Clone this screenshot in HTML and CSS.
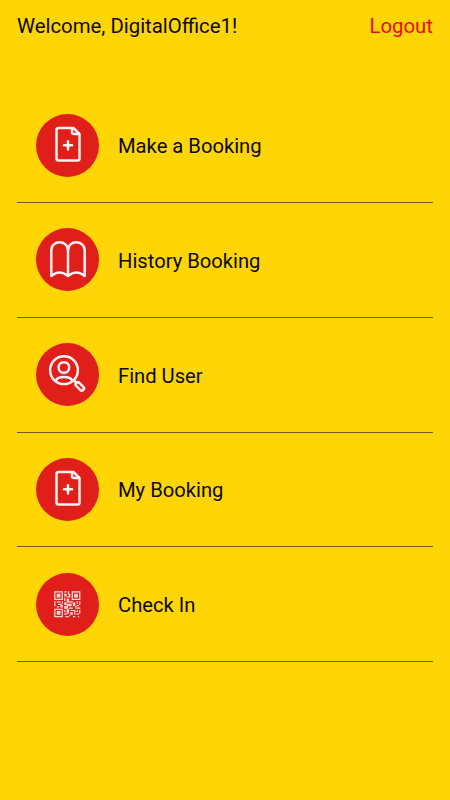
FILE: index.html
```html
<!DOCTYPE html>
<html lang="en">
<head>
<meta charset="utf-8" />
<meta name="viewport" content="width=device-width, initial-scale=1" />
<title>Digital Office</title>
<link rel="stylesheet" href="styles.css">
</head>

<body>

<header>
    <span>Welcome, DigitalOffice1!</span>
    <a class="logout" href="#">Logout</a>
</header>

<nav class="menu">
    <a href="#">
        <svg class="icon" viewBox="0 0 63 63">
            <path d="M37.500 14H22.500Q20.500 14 20.500 16V44.500Q20.500 46.500 22.500 46.500H41.500Q43.500 46.500 43.500 44.500V20L37.500 14H36V18Q36 20 38 20H43" />
            <path d="M32 27.200v8.200M27.900 31.300h8.200" />
        </svg>
        <span>Make a Booking</span>
    </a>
    <a href="#">
        <svg class="icon" viewBox="0 0 63 63">
            <path d="M32 48V22.500C32 11.600 15.300 11.600 15.300 22.500V48Q23.500 41 32 48Q40.500 41 48.700 48V22.500C48.700 11.600 32 11.600 32 22.500" />
        </svg>
        <span>History Booking</span>
    </a>
    <a href="#">
        <svg class="icon" viewBox="0 0 63 63">
            <circle cx="28" cy="27.200" r="13.900" />
            <circle cx="27.900" cy="24.500" r="5.300" />
            <path d="M19.800 37.500Q21.500 34 28 34T36.200 37.500" />
            <path d="M37.500 37l3 3" />
            <rect x="38.800" y="41.200" width="10" height="4.400" rx="2.200" transform="rotate(45 43.800 43.400)" />
        </svg>
        <span>Find User</span>
    </a>
    <a href="#">
        <svg class="icon" viewBox="0 0 63 63">
            <path d="M37.500 14H22.500Q20.500 14 20.500 16V44.500Q20.500 46.500 22.500 46.500H41.500Q43.500 46.500 43.500 44.500V20L37.500 14H36V18Q36 20 38 20H43" />
            <path d="M32 27.200v8.200M27.900 31.300h8.200" />
        </svg>
        <span>My Booking</span>
    </a>
    <a href="#">
        <svg class="icon" viewBox="0 0 63 63">
            <g class="qr" transform="translate(18.200 18.200) scale(1.245)">
                <!-- finder squares -->
                <path d="M0 0h7v7H0zM1 1v5h5V1zM2 2h3v3H2z" />
                <path d="M14 0h7v7h-7zM15 1v5h5V1zM16 2h3v3h-3z" />
                <path d="M0 14h7v7H0zM1 15v5h5v-5zM2 16h3v3H2z" />
                <!-- data -->
                <path d="M8 0h2v1H8zM11 0h1v3h-1zM8 2h2v2H8zM10 4h3v1h-3zM8 5h1v3H8zM10 6h2v3h-2zM12 2h1v2h-1z" />
                <path d="M0 8h1v4H0zM2 8h3v1H2zM3 10h3v1H3zM2 12h2v1H2zM5 11h2v2H5zM6 8h1v2H6zM8 9h2v2H8z" />
                <path d="M10 10h4v2h-4zM12 8h3v1h-3zM8 12h3v2H8zM12 13h3v1h-3zM15 9h2v3h-2zM18 8h1v2h-1zM20 8h1v3h-1zM18 11h2v1h-2zM17 12h1v2h-1z" />
                <path d="M8 15h1v2H8zM10 14h2v4h-2zM8 18h2v1H8zM9 20h3v1H9zM13 15h4v1h-4zM13 17h2v2h-2zM12 19h1v1h-1zM16 16h1v3h-1zM18 13h3v1h-3zM18 15h1v2h-1zM20 15h1v3h-1zM18 18h2v1h-2zM15 20h2v1h-2zM19 20h1v1h-1z" />
            </g>
        </svg>
        <span>Check In</span>
    </a>
</nav>

</body>
</html>
```
FILE: styles.css
```css
body {
    background: #FFD506;
    color: #0A0A00;
    font-family: Roboto, "Liberation Sans", sans-serif;
    font-size: 20.2px;
    line-height: 24px;
    margin: 0;
    padding: 14px 17px 0;
}

a {
    color: inherit;
    text-decoration: none;
}

header {
    display: flex;
    font-size: 20.35px;
    justify-content: space-between;
}

header .logout {
    color: #E60D0D;
}

.menu {
    margin-top: 50.2px;
}

.menu a {
    align-items: center;
    border-bottom: 1px solid #6F6012;
    box-sizing: border-box;
    display: flex;
    gap: 19px;
    height: 114.8px;
    padding-left: 19px;
}

.menu span {
    padding-top: 2px;
}

.icon {
    background: #E01E1A;
    border-radius: 50%;
    fill: none;
    height: 63px;
    stroke: #FFF0F0;
    stroke-linecap: round;
    stroke-linejoin: round;
    stroke-width: 2.5px;
    width: 63px;
}

.icon .qr {
    fill: #FFDCDC;
    fill-rule: evenodd;
    stroke: none;
}
```
